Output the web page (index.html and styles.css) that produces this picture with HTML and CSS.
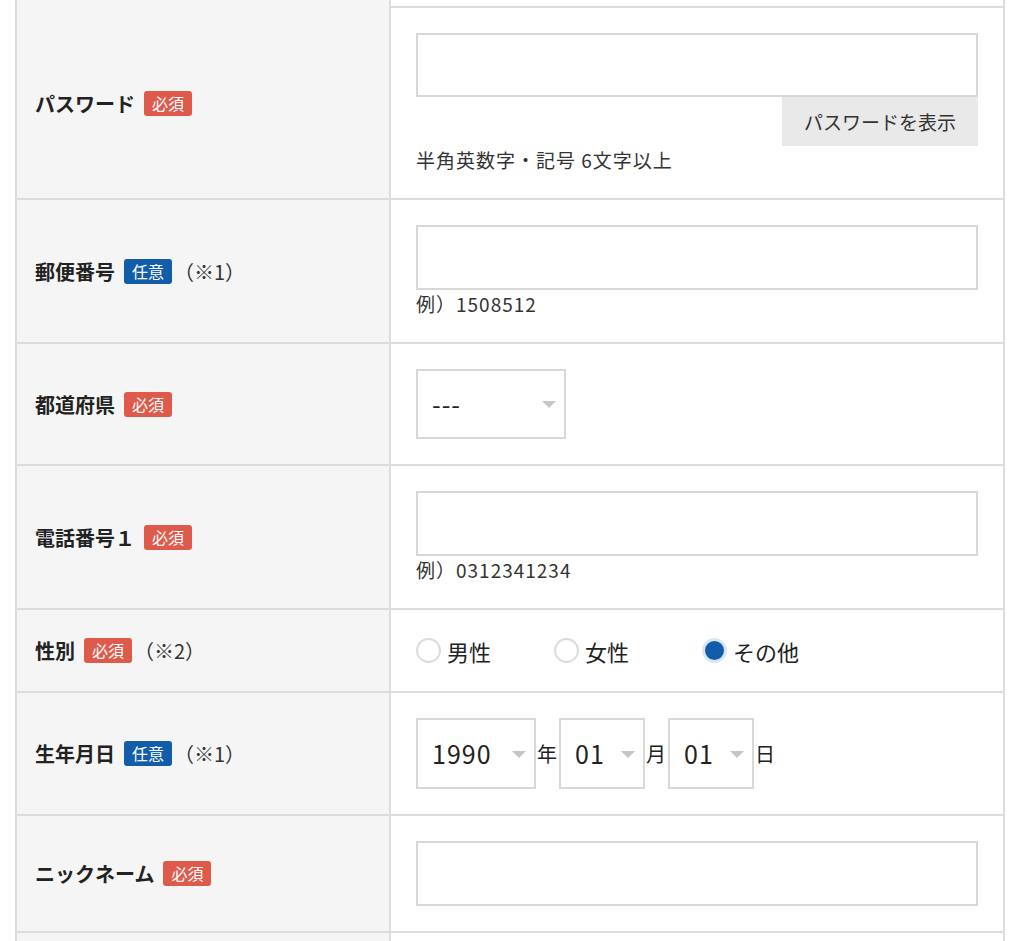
FILE: index.html
```html
<!DOCTYPE html>
<html lang="ja">
<head>
    <meta charset="UTF-8">
    <meta name="viewport" content="width=device-width, initial-scale=1.0">
    <title>会員登録</title>
    <link rel="stylesheet" href="styles.css">
</head>
<body>
    <div class="form">
        <div class="row stub-top">
            <div class="label"></div>
            <div class="field"></div>
        </div>

        <div class="row row-password">
            <div class="label">パスワード<span class="badge required">必須</span></div>
            <div class="field">
                <input type="password" class="text-input">
                <div class="show-pass">
                    <button type="button" class="show-button">パスワードを表示</button>
                </div>
                <p class="hint">半角英数字・記号 6文字以上</p>
            </div>
        </div>

        <div class="row">
            <div class="label">郵便番号<span class="badge optional">任意</span><span class="note">（※1）</span></div>
            <div class="field">
                <input type="text" class="text-input">
                <p class="hint">例）1508512</p>
            </div>
        </div>

        <div class="row">
            <div class="label">都道府県<span class="badge required">必須</span></div>
            <div class="field">
                <div class="select-wrap pref">
                    <select class="select">
                        <option>---</option>
                    </select>
                </div>
            </div>
        </div>

        <div class="row">
            <div class="label">電話番号１<span class="badge required">必須</span></div>
            <div class="field">
                <input type="tel" class="text-input">
                <p class="hint">例）0312341234</p>
            </div>
        </div>

        <div class="row">
            <div class="label">性別<span class="badge required">必須</span><span class="note">（※2）</span></div>
            <div class="field">
                <div class="radio-group">
                    <label class="radio"><input type="radio" name="gender">男性</label>
                    <label class="radio"><input type="radio" name="gender">女性</label>
                    <label class="radio"><input type="radio" name="gender" checked>その他</label>
                </div>
            </div>
        </div>

        <div class="row">
            <div class="label">生年月日<span class="badge optional">任意</span><span class="note">（※1）</span></div>
            <div class="field">
                <div class="date-group">
                    <div class="select-wrap year">
                        <select class="select"><option>1990</option></select>
                    </div>
                    <span class="unit">年</span>
                    <div class="select-wrap day">
                        <select class="select"><option>01</option></select>
                    </div>
                    <span class="unit">月</span>
                    <div class="select-wrap day">
                        <select class="select"><option>01</option></select>
                    </div>
                    <span class="unit">日</span>
                </div>
            </div>
        </div>

        <div class="row">
            <div class="label">ニックネーム<span class="badge required">必須</span></div>
            <div class="field">
                <input type="text" class="text-input">
            </div>
        </div>

        <div class="row stub-bottom">
            <div class="label"></div>
            <div class="field"></div>
        </div>
    </div>
</body>
</html>
```

FILE: styles.css
```css
body {
    margin: 0;
    font-family: "Noto Sans CJK JP", "Noto Sans", sans-serif;
    background-color: white;
    color: #222;
}

.form {
    margin-left: 15px;
    width: 990px;
    box-sizing: border-box;
    border-left: 2px solid #dcdcdc;
    border-right: 2px solid #dcdcdc;
}

.row {
    display: grid;
    grid-template-columns: 374px 1fr;
    border-top: 2px solid #dcdcdc;
}

.row.stub-top {
    border-top: none;
    height: 6px;
}

.row.stub-bottom {
    height: 40px;
}

.label {
    display: flex;
    align-items: center;
    padding-left: 18px;
    background-color: #f5f5f5;
    border-right: 2px solid #dcdcdc;
    font-size: 20px;
    font-weight: bold;
    color: #222;
}

.badge {
    display: inline-block;
    margin-left: 9px;
    padding: 0 8px;
    height: 25px;
    line-height: 25px;
    border-radius: 3px;
    font-size: 16px;
    font-weight: normal;
    color: white;
}

.badge.required {
    background-color: #de5a4b;
}

.badge.optional {
    background-color: #115da9;
}

.note {
    margin-left: 2px;
    font-size: 20px;
    font-weight: normal;
    color: #333;
}

.field {
    padding: 25px;
}

.text-input {
    display: block;
    width: 100%;
    height: 65px;
    box-sizing: border-box;
    border: 2px solid #d8d8d8;
    border-radius: 0;
    margin: 0;
    font-size: 20px;
    outline: none;
}

.row-password .text-input {
    height: 64px;
}

.show-pass {
    display: flex;
    justify-content: flex-end;
}

.show-button {
    height: 49px;
    padding: 0 22px;
    border: none;
    border-radius: 0;
    background-color: #e9e9e9;
    font-family: inherit;
    font-size: 19px;
    color: #333;
}

.hint {
    margin: 0;
    height: 27px;
    line-height: 27px;
    font-size: 19px;
    letter-spacing: 1px;
    color: #333;
}

.select-wrap {
    position: relative;
    display: inline-block;
}

.select-wrap::after {
    content: "";
    position: absolute;
    right: 10px;
    top: 50%;
    margin-top: -3px;
    border-left: 7px solid transparent;
    border-right: 7px solid transparent;
    border-top: 7px solid #c6c6c6;
    pointer-events: none;
}

.select {
    appearance: none;
    -webkit-appearance: none;
    display: block;
    height: 71px;
    box-sizing: border-box;
    border: 2px solid #d8d8d8;
    border-radius: 0;
    background-color: white;
    padding: 0 0 2px 14px;
    font-family: inherit;
    font-size: 25px;
    letter-spacing: 1px;
    color: #222;
}

.pref .select {
    width: 150px;
    height: 70px;
}

.year .select {
    width: 120px;
}

.day .select {
    width: 86px;
}

.date-group {
    display: flex;
    align-items: center;
}

.unit {
    margin: 0 2px 0 1px;
    font-size: 20px;
    color: #222;
}

.radio-group {
    display: flex;
    align-items: center;
    height: 31px;
}

.radio {
    display: flex;
    align-items: center;
    gap: 6px;
    margin-right: 63px;
    font-size: 22px;
    color: #222;
}

.radio:nth-child(2) {
    margin-right: 73px;
}

.radio input {
    appearance: none;
    -webkit-appearance: none;
    margin: 0;
    width: 25px;
    height: 25px;
    box-sizing: border-box;
    border: 2px solid #dcdcdc;
    border-radius: 50%;
    background-color: white;
}

.radio input:checked {
    border: 3px solid #d9e6f4;
    background-color: #115da9;
}
```
